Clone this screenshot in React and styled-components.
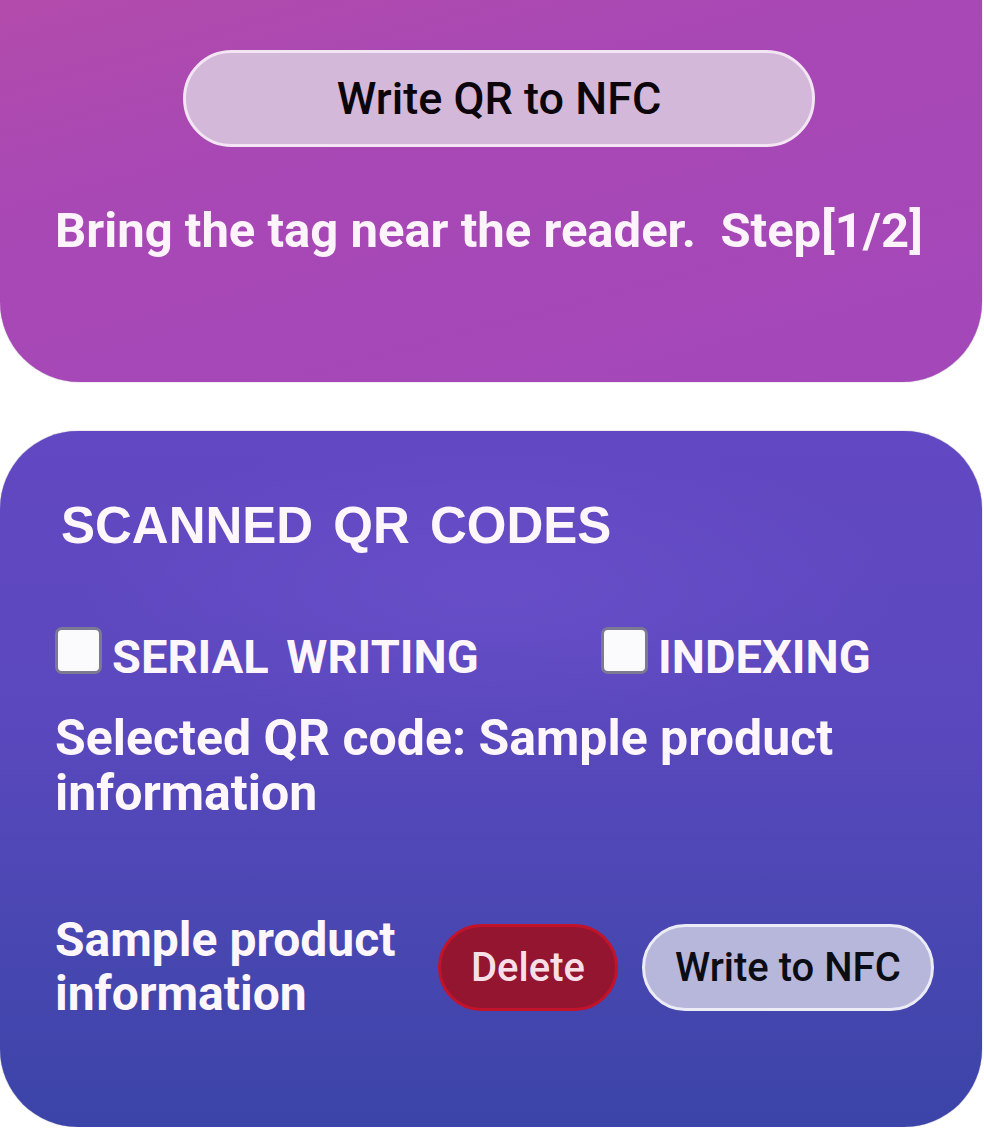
import React from 'react'
import styled, { createGlobalStyle } from 'styled-components'

const GlobalStyle = createGlobalStyle`
  body {
    margin: 0;
    background: #ffffff;
    font-family: Roboto, "Liberation Sans", Arial, sans-serif;
  }
`

const Page = styled.div`
  display: flex;
  flex-direction: column;
  gap: 49px;
  width: 982px;
`

const WriterCard = styled.section`
  box-sizing: border-box;
  display: flex;
  flex-direction: column;
  align-items: flex-start;
  padding: 50px 55px 121px;
  border-radius: 0 0 80px 80px;
  background: linear-gradient(165deg, #b24bab 0%, #a848b5 35%, #a347b9 100%);
  box-shadow: 0 0 1px rgba(40, 10, 50, 0.7);
`

const WriteButton = styled.button`
  box-sizing: border-box;
  width: 632px;
  height: 97px;
  margin-left: 128px;
  border: 3px solid #f3e5f3;
  border-radius: 49px;
  background: #d3b8d9;
  color: #0c050c;
  font-family: inherit;
  font-size: 45px;
  font-weight: 500;
  cursor: pointer;
`

const Hint = styled.p`
  margin: 54px 0 0;
  color: #fdf4fb;
  font-size: 49px;
  font-weight: 700;
  line-height: 60px;
  white-space: nowrap;
`

const ListCard = styled.section`
  box-sizing: border-box;
  display: flex;
  flex-direction: column;
  padding: 65px 55px 106px;
  border-radius: 78px;
  background:
    radial-gradient(ellipse 60% 30% at 50% 22%, rgba(120, 90, 215, 0.35), transparent 70%),
    linear-gradient(180deg, #6248c2 0%, #5b48be 40%, #4a47b2 70%, #3b44a8 100%);
  box-shadow: 0 0 1px rgba(10, 10, 50, 0.7);
`

const Heading = styled.h2`
  margin: 0 0 0 6px;
  color: #fdf6fb;
  font-family: "Liberation Sans", Arial, sans-serif;
  font-size: 51px;
  font-weight: 700;
  word-spacing: 6px;
`

const Options = styled.div`
  display: grid;
  grid-template-columns: 546px 1fr;
  margin-top: 72px;
`

const Option = styled.label`
  display: flex;
  align-items: flex-start;
  gap: 10px;
  cursor: pointer;
`

const Box = styled.input.attrs({ type: 'checkbox' })`
  appearance: none;
  box-sizing: border-box;
  flex: none;
  width: 47px;
  height: 47px;
  margin: 0;
  border: 3px solid #7b7a92;
  border-radius: 7px;
  background: #fbfbfd;
`

const OptionText = styled.span`
  color: #fdf6fb;
  font-size: 47px;
  font-weight: 700;
  line-height: 60px;
  white-space: nowrap;
  word-spacing: 6px;
`

const Selected = styled.p`
  margin: 24px 0 0;
  color: #fdf6fb;
  font-size: 50px;
  font-weight: 700;
  line-height: 55px;
`

const ItemRow = styled.div`
  display: flex;
  align-items: center;
  margin-top: 92px;
`

const ItemName = styled.div`
  flex: 0 0 383px;
  color: #fdf6fb;
  font-size: 48px;
  font-weight: 700;
  line-height: 54px;
`

const Actions = styled.div`
  display: flex;
  gap: 24px;
`

const Pill = styled.button`
  box-sizing: border-box;
  height: 87px;
  padding: 0 30px;
  border: 3px solid ${(p) => (p.$danger ? '#c2132b' : '#ececf6')};
  border-radius: 44px;
  background: ${(p) => (p.$danger ? '#94152f' : '#b7b7db')};
  color: ${(p) => (p.$danger ? '#f7dfe8' : '#0c0c14')};
  font-family: inherit;
  font-size: 40px;
  font-weight: 500;
  white-space: nowrap;
  cursor: pointer;
`

export default function App() {
  return (
    <>
      <GlobalStyle />
      <Page>
        <WriterCard>
          <WriteButton>Write QR to NFC</WriteButton>
          <Hint>{'Bring the tag near the reader.\u00a0 Step[1/2]'}</Hint>
        </WriterCard>
        <ListCard>
          <Heading>SCANNED QR CODES</Heading>
          <Options>
            <Option>
              <Box />
              <OptionText>SERIAL WRITING</OptionText>
            </Option>
            <Option>
              <Box />
              <OptionText>INDEXING</OptionText>
            </Option>
          </Options>
          <Selected>Selected QR code: Sample product information</Selected>
          <ItemRow>
            <ItemName>Sample product information</ItemName>
            <Actions>
              <Pill $danger>Delete</Pill>
              <Pill>Write to NFC</Pill>
            </Actions>
          </ItemRow>
        </ListCard>
      </Page>
    </>
  )
}
